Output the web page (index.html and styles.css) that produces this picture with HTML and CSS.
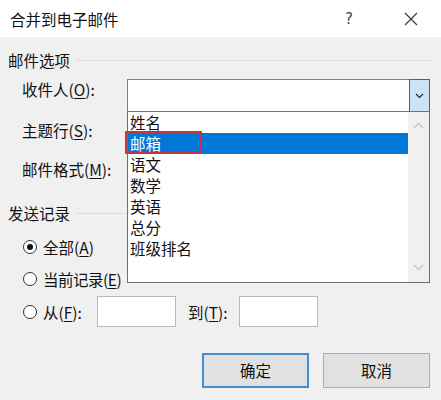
FILE: index.html
```html
<!DOCTYPE html>
<html lang="zh-CN">
<head>
<meta charset="utf-8">
<title>合并到电子邮件</title>
<link rel="stylesheet" href="styles.css">
</head>
<body>
<div class="dialog">
  <div class="titlebar">
    <span class="title">合并到电子邮件</span>
    <span class="help">?</span>
    <span class="close"><svg width="14" height="14" viewBox="0 0 14 14"><path d="M1 1 L13 13 M13 1 L1 13" stroke="#333" stroke-width="1.1" fill="none"/></svg></span>
  </div>
  <div class="body">
    <div class="group-head"><span>邮件选项</span><i class="rule"></i></div>
    <div class="row row-to">
      <span class="label">收件人(<u>O</u>):</span>
      <div class="combo">
        <div class="combo-field"></div>
        <div class="combo-btn"><svg width="9" height="6" viewBox="0 0 9 6"><path d="M1 1 L4.5 4.5 L8 1" stroke="#222" stroke-width="1.1" fill="none"/></svg></div>
      </div>
    </div>
    <div class="row row-subject"><span class="label">主题行(<u>S</u>):</span></div>
    <div class="row row-format"><span class="label">邮件格式(<u>M</u>):</span></div>
    <div class="group-head group-send"><span>发送记录</span><i class="rule"></i></div>
    <div class="radio-row r1"><span class="radio checked"></span><span>全部(<u>A</u>)</span></div>
    <div class="radio-row r2"><span class="radio"></span><span class="tight">当前记录(<u>E</u>)</span></div>
    <div class="range-row">
      <span class="radio"></span>
      <span class="from">从(<u>F</u>):</span>
      <span class="input"></span>
      <span class="to">到(<u>T</u>):</span>
      <span class="input"></span>
    </div>
    <div class="buttons">
      <button class="btn primary">确定</button>
      <button class="btn">取消</button>
    </div>
  </div>
  <div class="dropdown">
    <div class="items">
      <div class="item">姓名</div>
      <div class="item selected">邮箱<span class="mark"></span></div>
      <div class="item">语文</div>
      <div class="item">数学</div>
      <div class="item">英语</div>
      <div class="item">总分</div>
      <div class="item">班级排名</div>
    </div>
    <div class="scrollbar">
      <svg width="11" height="7" viewBox="0 0 11 7"><path d="M1 6 L5.5 1.5 L10 6" stroke="#c2c2c2" stroke-width="1.3" fill="none"/></svg>
      <svg width="11" height="7" viewBox="0 0 11 7"><path d="M1 1 L5.5 5.5 L10 1" stroke="#c2c2c2" stroke-width="1.3" fill="none"/></svg>
    </div>
  </div>
</div>
</body>
</html>
```

FILE: styles.css
```css
html, body {
  margin: 0;
  padding: 0;
}
body {
  background: #f0f0f0;
  font-family: "Noto Sans CJK SC", "Noto Sans", sans-serif;
  font-size: 15.5px;
  color: #111;
  width: 441px;
  height: 400px;
  overflow: hidden;
}
u {
  text-decoration: underline;
  text-underline-offset: 2px;
  text-decoration-thickness: 1px;
}
.dialog {
  position: relative;
  width: 441px;
  height: 400px;
  background: #f0f0f0;
}
.titlebar {
  height: 37px;
  background: #fff;
  display: flex;
  align-items: center;
  padding: 0 18px 0 10px;
  box-sizing: border-box;
}
.title {
  flex: 1;
  font-size: 15.5px;
  color: #111;
  line-height: 20px;
  padding-top: 1px;
}
.help {
  width: 20px;
  text-align: center;
  margin-right: 40px;
  font-family: "DejaVu Sans", sans-serif;
  font-size: 15px;
  color: #444;
}
.close {
  width: 24px;
  height: 24px;
  display: flex;
  align-items: center;
  justify-content: center;
}
.group-head {
  display: flex;
  align-items: center;
  height: 24px;
  line-height: 24px;
  margin: 11px 10px 0 8px;
}
.group-head .rule {
  flex: 1;
  height: 1px;
  background: #dcdcdc;
  margin-left: 7px;
}
.group-send {
  margin-top: 22px;
}
.row {
  display: flex;
  align-items: flex-start;
  margin-left: 22px;
}
.label {
  width: 105px;
  line-height: 20px;
  white-space: nowrap;
}
.row-to {
  margin-top: 7px;
}
.row-to .label {
  line-height: 21px;
}
.combo {
  width: 303px;
  height: 33px;
  box-sizing: border-box;
  border: 1px solid #7f7f7f;
  background: #fff;
  display: flex;
}
.combo-field {
  flex: 1;
}
.combo-btn {
  width: 21px;
  margin: -1px -1px -1px 0;
  box-sizing: border-box;
  border: 1px solid #3d6789;
  background: #cde3f6;
  display: flex;
  align-items: center;
  justify-content: center;
}
.row-subject {
  margin-top: 8px;
  height: 20px;
}
.row-format {
  margin-top: 19px;
  height: 20px;
}
.radio-row {
  display: flex;
  align-items: center;
  height: 20px;
  line-height: 20px;
  margin: 12px 0 0 23px;
  white-space: nowrap;
}
.tight {
  letter-spacing: -0.5px;
}
.radio {
  width: 14px;
  height: 14px;
  box-sizing: border-box;
  border: 1px solid #333;
  border-radius: 50%;
  background: #fff;
  margin-right: 6px;
  display: flex;
  align-items: center;
  justify-content: center;
  flex: none;
}
.radio.checked::after {
  content: "";
  width: 6px;
  height: 6px;
  border-radius: 50%;
  background: #111;
}
.range-row {
  display: flex;
  align-items: center;
  height: 31px;
  margin: 7px 0 0 23px;
  white-space: nowrap;
}
.from {
  width: 54px;
}
.to {
  width: 51px;
}
.input {
  width: 79px;
  height: 31px;
  box-sizing: border-box;
  border: 1px solid #b9b9b9;
  background: #fff;
  margin-right: 12px;
}
.buttons {
  display: flex;
  justify-content: flex-end;
  gap: 14px;
  margin: 26px 11px 0 0;
}
.btn {
  width: 107px;
  height: 35px;
  box-sizing: border-box;
  background: #e1e1e1;
  border: 1px solid #adadad;
  font-family: "Noto Sans CJK SC", "Noto Sans", sans-serif;
  font-size: 15.5px;
  color: #111;
  padding: 0;
  line-height: 33px;
}
.btn.primary {
  border: 2px solid #3f8fd2;
  line-height: 31px;
}
.dropdown {
  position: absolute;
  left: 127px;
  top: 111px;
  width: 303px;
  height: 172px;
  box-sizing: border-box;
  border: 1px solid #707070;
  background: #fff;
  display: flex;
}
.items {
  flex: 1;
}
.item {
  position: relative;
  height: 21px;
  line-height: 21px;
  padding-left: 2px;
  font-size: 15.5px;
  color: #111;
}
.item.selected {
  background: #0078d7;
  color: #fff;
}
.mark {
  position: absolute;
  left: -3px;
  top: -2px;
  width: 77px;
  height: 23px;
  box-sizing: border-box;
  border: 2px solid #c8323f;
  border-radius: 1px;
}
.scrollbar {
  width: 21px;
  background: #f0f0f0;
  display: flex;
  flex-direction: column;
  align-items: center;
  justify-content: space-between;
  padding: 10px 0 11px;
  box-sizing: border-box;
}
```
